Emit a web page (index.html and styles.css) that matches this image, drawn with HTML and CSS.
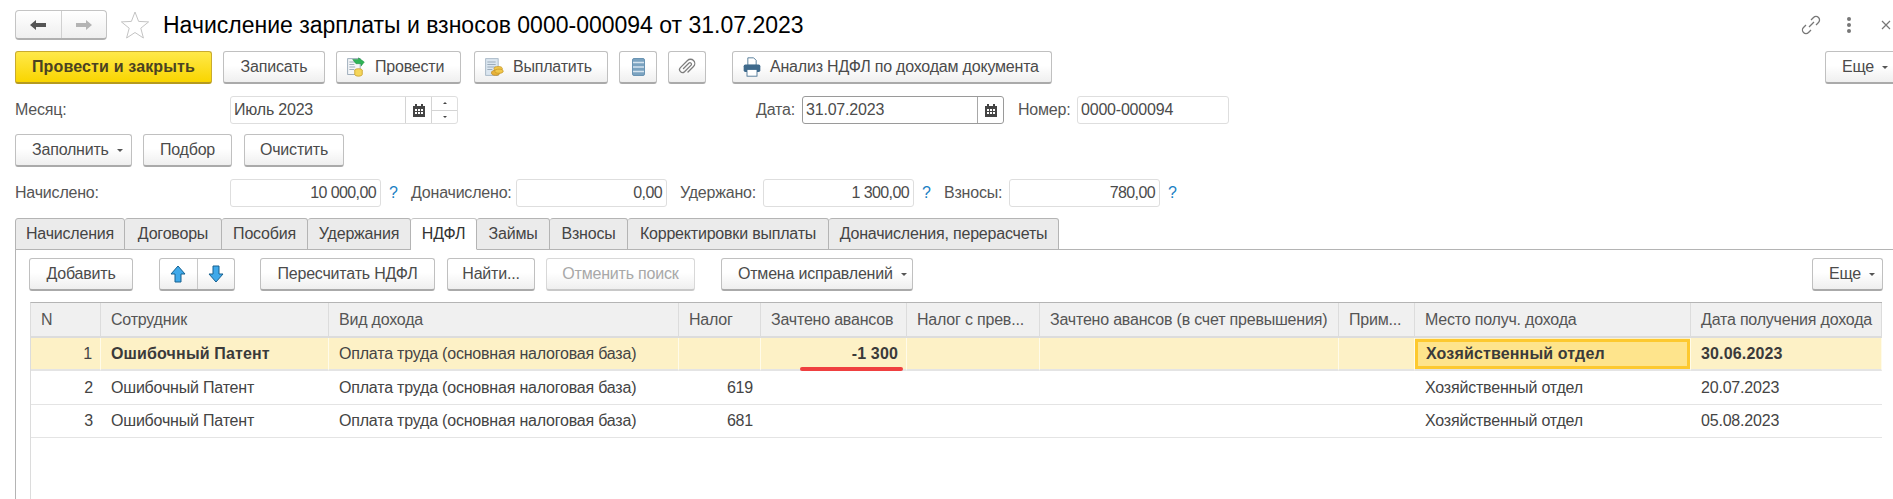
FILE: index.html
```html
<!DOCTYPE html>
<html lang="ru">
<head>
<meta charset="utf-8">
<title>Начисление зарплаты и взносов</title>
<link rel="stylesheet" href="styles.css">
</head>
<body>
<div class="page">
  <header class="titlebar">
    <div class="nav">
      <span class="nav-cell"><svg width="18" height="14" viewBox="0 0 18 14"><path d="M1 7l6-5v3h10v4H7v3z" fill="#555"/></svg></span>
      <span class="nav-cell"><svg width="18" height="14" viewBox="0 0 18 14"><path d="M17 7l-6-5v3H1v4h10v3z" fill="#b4b4b4"/></svg></span>
    </div>
    <svg class="star" width="30" height="30" viewBox="0 0 30 30"><path d="M15 2l3.6 9.4 10 .5-7.800 6.300 2.600 9.800L15 22.500 6.600 28l2.600-9.800L1.400 11.900l10-.5z" fill="#fff" stroke="#c4c4c4"/></svg>
    <h1 class="title">Начисление зарплаты и взносов 0000-000094 от 31.07.2023</h1>
    <div class="tools">
      <svg width="22" height="22" viewBox="0 0 22 22" fill="none" stroke="#777" stroke-width="1.300"><path d="M9 13l5-5M11 6l2.500-2.500a3.500 3.500 0 0 1 5 5L16 11M11 16l-2.500 2.500a3.500 3.500 0 0 1-5-5L6 11"/></svg>
      <svg class="dots" width="6" height="18" viewBox="0 0 6 18" fill="#777"><circle cx="3" cy="3" r="2"/><circle cx="3" cy="9" r="2"/><circle cx="3" cy="15" r="2"/></svg>
      <svg class="close" width="10" height="10" viewBox="0 0 10 10" stroke="#777" stroke-width="1.200"><path d="M1 1l8 8M9 1l-8 8"/></svg>
    </div>
  </header>

  <div class="row cmd">
    <button class="btn primary w-post">Провести и закрыть</button>
    <button class="btn w-save">Записать</button>
    <button class="btn icon-btn w-prov"><svg class="ic" width="20" height="20" viewBox="0 0 24 24"><rect x="2" y="2" width="15" height="19" fill="#f4f6f8" stroke="#8fa0b0"/><path d="M4 6h8M4 9h6M4 12h7M4 15h6" stroke="#8fa0b0"/><ellipse cx="15" cy="16" rx="4.500" ry="2" fill="#f5d65a" stroke="#c9a02c"/><path d="M10.500 16v5c0 1 2 2 4.500 2s4.500-1 4.500-2v-5" fill="#f5d65a" stroke="#c9a02c"/><path d="M8 3h7V1l7 5-4 5v-3h-6z" fill="#2fb457" stroke="#1f8f42" stroke-width=".6"/></svg>Провести</button>
    <button class="btn icon-btn w-pay"><svg class="ic" width="20" height="20" viewBox="0 0 24 24"><rect x="2" y="2" width="15" height="20" fill="#dbe6f0" stroke="#9fb0c0"/><path d="M4 6h10M4 9h10M4 12h10M4 15h6" stroke="#8fa0b0"/><ellipse cx="17" cy="14" rx="5" ry="2.500" fill="#f2c84b" stroke="#c99a2a"/><ellipse cx="14" cy="19" rx="5" ry="3" fill="#e8b23a" stroke="#c08a20"/><ellipse cx="18" cy="17" rx="5" ry="2.500" fill="#f2c84b" stroke="#c99a2a"/></svg>Выплатить</button>
    <button class="btn w-icon"><svg width="13" height="18" viewBox="0 0 13 18"><rect x=".5" y=".5" width="12" height="17" rx="1.500" fill="#7ba3c0" stroke="#6a94b3"/><path d="M1 4.500h11M1 9h11M1 13.500h11" stroke="#d5e4ef" stroke-width="1.300"/></svg></button>
    <button class="btn w-icon gap-clip"><svg width="18" height="18" viewBox="0 0 18 18" fill="none" stroke="#7d7d7d" stroke-width="1.300" stroke-linecap="round"><path d="M5.500 10.500L11 5a1.500 1.500 0 0 1 2.100 2.100L6.500 13.700a2.900 2.900 0 0 1-4.100-4.100L9.500 2.500a4.200 4.200 0 0 1 6 6L10 14"/></svg></button>
    <button class="btn icon-btn w-report"><svg class="ic" width="20" height="20" viewBox="0 0 24 24"><path d="M7 1h7l3 3v6H7z" fill="#fff" stroke="#3f6a8c"/><rect x="2" y="9" width="20" height="9" rx="2" fill="#3f6a8c"/><rect x="6" y="15" width="12" height="8" fill="#fff" stroke="#3f6a8c"/></svg>Анализ НДФЛ по доходам документа</button>
    <button class="btn drop top-more">Еще<i class="caret"></i></button>
  </div>

  <div class="row fields-a">
    <label class="lbl l-month">Месяц:</label>
    <div class="field f-month"><span class="val">Июль 2023</span><span class="addon"><svg width="12" height="13" viewBox="0 0 12 13"><path d="M0 2h2V0h2v2h4V0h2v2h2v11H0z" fill="#444"/><path d="M2 5h2v2H2zM5 5h2v2H5zM8 5h2v2H8zM2 8h2v2H2zM5 8h2v2H5zM8 8h2v2H8z" fill="#fff"/></svg></span><span class="spin"><i class="up"></i><i class="dn"></i></span></div>
    <label class="lbl l-date">Дата:</label>
    <div class="field focus f-date"><span class="val">31.07.2023</span><span class="addon"><svg width="12" height="13" viewBox="0 0 12 13"><path d="M0 2h2V0h2v2h4V0h2v2h2v11H0z" fill="#444"/><path d="M2 5h2v2H2zM5 5h2v2H5zM8 5h2v2H8zM2 8h2v2H2zM5 8h2v2H5zM8 8h2v2H8z" fill="#fff"/></svg></span></div>
    <label class="lbl l-num">Номер:</label>
    <div class="field f-num"><span class="val">0000-000094</span></div>
  </div>

  <div class="row fill">
    <button class="btn drop w-fill">Заполнить<i class="caret"></i></button>
    <button class="btn w-pick">Подбор</button>
    <button class="btn w-clear">Очистить</button>
  </div>

  <div class="row totals">
    <label class="lbl l-acc">Начислено:</label>
    <div class="field f-sum"><span class="val num">10 000,00</span></div><span class="q">?</span>
    <label class="lbl l-add">Доначислено:</label>
    <div class="field f-sum"><span class="val num">0,00</span></div>
    <label class="lbl l-held">Удержано:</label>
    <div class="field f-sum"><span class="val num">1 300,00</span></div><span class="q">?</span>
    <label class="lbl l-fee">Взносы:</label>
    <div class="field f-sum"><span class="val num">780,00</span></div><span class="q">?</span>
  </div>

  <nav class="tabs">
    <a class="tab t1">Начисления</a><a class="tab t2">Договоры</a><a class="tab t3">Пособия</a><a class="tab t4">Удержания</a><a class="tab active t5">НДФЛ</a><a class="tab t6">Займы</a><a class="tab t7">Взносы</a><a class="tab t8">Корректировки выплаты</a><a class="tab t9">Доначисления, перерасчеты</a>
  </nav>

  <section class="panel">
    <div class="row bar">
      <button class="btn w-add">Добавить</button>
      <div class="btn-group">
        <span><svg width="16" height="18" viewBox="0 0 16 18"><path d="M8 1l7 8h-4v8H5V9H1z" fill="#3fa9ea" stroke="#16608f"/></svg></span>
        <span><svg width="16" height="18" viewBox="0 0 16 18"><path d="M8 17l7-8h-4V1H5v8H1z" fill="#3fa9ea" stroke="#16608f"/></svg></span>
      </div>
      <button class="btn w-recalc">Пересчитать НДФЛ</button>
      <button class="btn w-find">Найти...</button>
      <button class="btn disabled w-cancel">Отменить поиск</button>
      <button class="btn drop w-undo">Отмена исправлений<i class="caret"></i></button>
      <button class="btn drop w-more">Еще<i class="caret"></i></button>
    </div>

    <div class="grid">
      <div class="gh">N</div><div class="gh">Сотрудник</div><div class="gh">Вид дохода</div><div class="gh">Налог</div><div class="gh">Зачтено авансов</div><div class="gh">Налог с прев...</div><div class="gh">Зачтено авансов (в счет превышения)</div><div class="gh">Прим...</div><div class="gh">Место получ. дохода</div><div class="gh">Дата получения дохода</div>

      <div class="gc sel r">1</div><div class="gc sel b">Ошибочный Патент</div><div class="gc sel">Оплата труда (основная налоговая база)</div><div class="gc sel r"></div><div class="gc sel r b mark">-1 300<span class="redline"></span></div><div class="gc sel"></div><div class="gc sel"></div><div class="gc sel"></div><div class="gc sel b cur"><span class="curbox">Хозяйственный отдел</span></div><div class="gc sel b">30.06.2023</div>

      <div class="gc r">2</div><div class="gc">Ошибочный Патент</div><div class="gc">Оплата труда (основная налоговая база)</div><div class="gc r">619</div><div class="gc"></div><div class="gc"></div><div class="gc"></div><div class="gc"></div><div class="gc">Хозяйственный отдел</div><div class="gc">20.07.2023</div>

      <div class="gc r">3</div><div class="gc">Ошибочный Патент</div><div class="gc">Оплата труда (основная налоговая база)</div><div class="gc r">681</div><div class="gc"></div><div class="gc"></div><div class="gc"></div><div class="gc"></div><div class="gc">Хозяйственный отдел</div><div class="gc">05.08.2023</div>
    </div>
  </section>
</div>
</body>
</html>
```
FILE: styles.css
```css
* { box-sizing: border-box; }
html, body { margin: 0; padding: 0; height: 499px; overflow: hidden; background: #fff; }
body { font: 16px/20px "Liberation Sans", Arial, sans-serif; letter-spacing: -0.2px; color: #4b4b4b; }
.page { width: 1893px; height: 499px; overflow: hidden; padding-left: 15px; }
.row { display: flex; align-items: center; }

.titlebar { display: flex; align-items: center; height: 30px; margin-top: 10px; }
.nav { display: flex; width: 92px; height: 30px; border: 1px solid #c4c4c4; border-bottom: 2px solid #b0b0b0; border-radius: 4px; background: linear-gradient(#fff, #efefef); }
.nav-cell { flex: 1; display: flex; align-items: center; justify-content: center; }
.nav-cell + .nav-cell { border-left: 1px solid #d0d0d0; }
.star { margin-left: 13px; }
.title { margin: 0 0 0 13px; font: 400 23px/30px "Liberation Sans", Arial, sans-serif; letter-spacing: 0; color: #000; white-space: nowrap; }
.tools { margin-left: auto; display: flex; align-items: center; }
.tools .dots { margin-left: 24px; }
.tools .close { margin-left: 29px; margin-right: 2px; }

.btn { display: inline-flex; align-items: center; justify-content: center; height: 33px; padding: 0; border: 1px solid #c0c0c0; border-bottom: 2px solid #aaa; border-radius: 3px; background: linear-gradient(#fff 45%, #efefef); font: 16px/20px "Liberation Sans", Arial, sans-serif; letter-spacing: -0.2px; color: #4b4b4b; white-space: nowrap; flex: none; }
.btn.primary { background: linear-gradient(#ffe94a, #f9d500); border-color: #c9ab2e; border-bottom-color: #b59a20; font-weight: 700; letter-spacing: 0.15px; color: #4a4222; }
.btn.disabled { color: #a8a8a8; border-color: #d8d8d8; border-bottom-color: #c8c8c8; }
.icon-btn { justify-content: flex-start; padding-left: 9px; }
.drop { justify-content: flex-start; padding-left: 16px; }
.ic { margin-right: 9px; flex: none; }
.w-report .ic { margin-right: 8px; }
.caret { display: inline-block; margin-left: 8px; border: 3px solid transparent; border-top: 3px solid #555; border-bottom: 0; }

.cmd { margin-top: 11px; height: 33px; }
.w-post { width: 197px; }
.w-save { width: 102px; margin-left: 11px; }
.w-prov { width: 125px; margin-left: 11px; }
.w-pay { width: 134px; margin-left: 13px; }
.w-icon { width: 38px; margin-left: 11px; }
.gap-clip { margin-left: 11px; }
.w-report { width: 320px; margin-left: 26px; }
.top-more { width: 72px; margin-left: auto; margin-right: -4px; }

.lbl { white-space: nowrap; color: #555; flex: none; }
.field { display: flex; align-items: stretch; height: 28px; background: #fff; border: 1px solid #dedede; border-radius: 3px; flex: none; }
.field.focus { border-color: #9a9a9a; }
.val { flex: 1; padding: 0 4px 0 3px; line-height: 26px; color: #4b4b4b; white-space: nowrap; }
.num { text-align: right; letter-spacing: -0.6px; }
.addon { width: 26px; display: flex; align-items: center; justify-content: center; border-left: 1px solid #d4d4d4; }
.focus .addon { border-left-color: #a8a8a8; }
.spin { width: 26px; display: flex; flex-direction: column; border-left: 1px solid #d4d4d4; }
.spin i { flex: 1; display: flex; align-items: center; justify-content: center; }
.spin i::after { content: ""; border: 2.500px solid transparent; }
.spin .up { border-bottom: 1px solid #d4d4d4; }
.spin .up::after { border-bottom-color: #444; border-top: 0; }
.spin .dn::after { border-top-color: #444; border-bottom: 0; }

.fields-a { margin-top: 12px; height: 28px; }
.l-month { width: 215px; }
.f-month { width: 228px; }
.l-date { margin-left: 298px; width: 46px; }
.f-date { width: 202px; }
.l-num { margin-left: 14px; width: 59px; }
.f-num { width: 152px; }

.fill { margin-top: 10px; height: 33px; }
.w-fill { width: 117px; }
.w-pick { width: 89px; margin-left: 11px; }
.w-clear { width: 100px; margin-left: 12px; }

.totals { margin-top: 12px; height: 28px; }
.l-acc { width: 215px; }
.f-sum { width: 151px; }
.q { width: 30px; padding-left: 8px; color: #1a7fc4; font-size: 16px; flex: none; }
.l-add { width: 105px; }
.l-held { width: 83px; margin-left: 13px; }
.l-fee { width: 65px; }

.tabs { display: flex; margin-top: 11px; height: 32px; }
.tab { display: flex; align-items: center; justify-content: center; height: 32px; background: #ebebeb; border: 1px solid #b4b4b4; border-left: 0; border-radius: 3px 3px 0 0; color: #444; white-space: nowrap; flex: none; }
.tab:first-child { border-left: 1px solid #b4b4b4; }
.tab.active { background: #fff; border-bottom-color: #fff; border-top-color: #c4c4c4; position: relative; color: #333; }
.t1 { width: 110px; } .t2 { width: 97px; } .t3 { width: 86px; } .t4 { width: 103px; } .t5 { width: 66px; } .t6 { width: 73px; } .t7 { width: 78px; } .t8 { width: 201px; } .t9 { width: 230px; }

.panel { margin-top: -1px; height: 260px; border-top: 1px solid #b4b4b4; border-left: 1px solid #b4b4b4; padding: 8px 0 0 13px; }
.bar { height: 33px; }
.w-add { width: 104px; }
.btn-group { display: flex; width: 76px; height: 33px; margin-left: 26px; border: 1px solid #c0c0c0; border-bottom: 2px solid #aaa; border-radius: 3px; background: linear-gradient(#fff 45%, #efefef); flex: none; }
.btn-group span { flex: 1; display: flex; align-items: center; justify-content: center; }
.btn-group span + span { border-left: 1px solid #c8c8c8; }
.w-recalc { width: 175px; margin-left: 25px; }
.w-find { width: 88px; margin-left: 12px; }
.w-cancel { width: 149px; margin-left: 11px; }
.w-undo { width: 192px; margin-left: 26px; }
.w-more { width: 71px; margin-left: 899px; }

.grid { display: grid; margin: 11px 0 0 1px; width: 1852px; height: 250px; align-content: start; border-left: 1px solid #dcdcdc; border-top: 1px solid #b4b4b4; grid-template-columns: 70px 228px 350px 82px 146px 133px 299px 76px 276px 191px; grid-template-rows: 35px 33px 34px 33px; }
.gh { display: flex; align-items: center; padding-left: 10px; background: #f0f0f0; border-right: 1px solid #dcdcdc; border-bottom: 2px solid #dcdcdc; white-space: nowrap; color: #555; }
.gc { display: flex; align-items: center; padding: 0 10px; border-bottom: 1px solid #e4e4e4; white-space: nowrap; color: #444; }
.gc.r { justify-content: flex-end; padding-right: 8px; }
.gc.sel { background: #fdf1c6; border-right: 1px solid #fffbe9; border-bottom: 2px solid #e4e4e4; }
.b { font-weight: 700; letter-spacing: 0.15px; color: #3a3a3a; }
.mark { position: relative; }
.redline { position: absolute; left: 39px; right: 3px; bottom: -2px; height: 4px; border-radius: 2px; background: #ef4040; }
.cur { position: relative; }
.curbox { position: absolute; left: 0; top: 1px; right: 0; bottom: 0; padding-left: 8px; display: flex; align-items: center; border: 3px solid #fdc92f; background: #fee48c; }
```
